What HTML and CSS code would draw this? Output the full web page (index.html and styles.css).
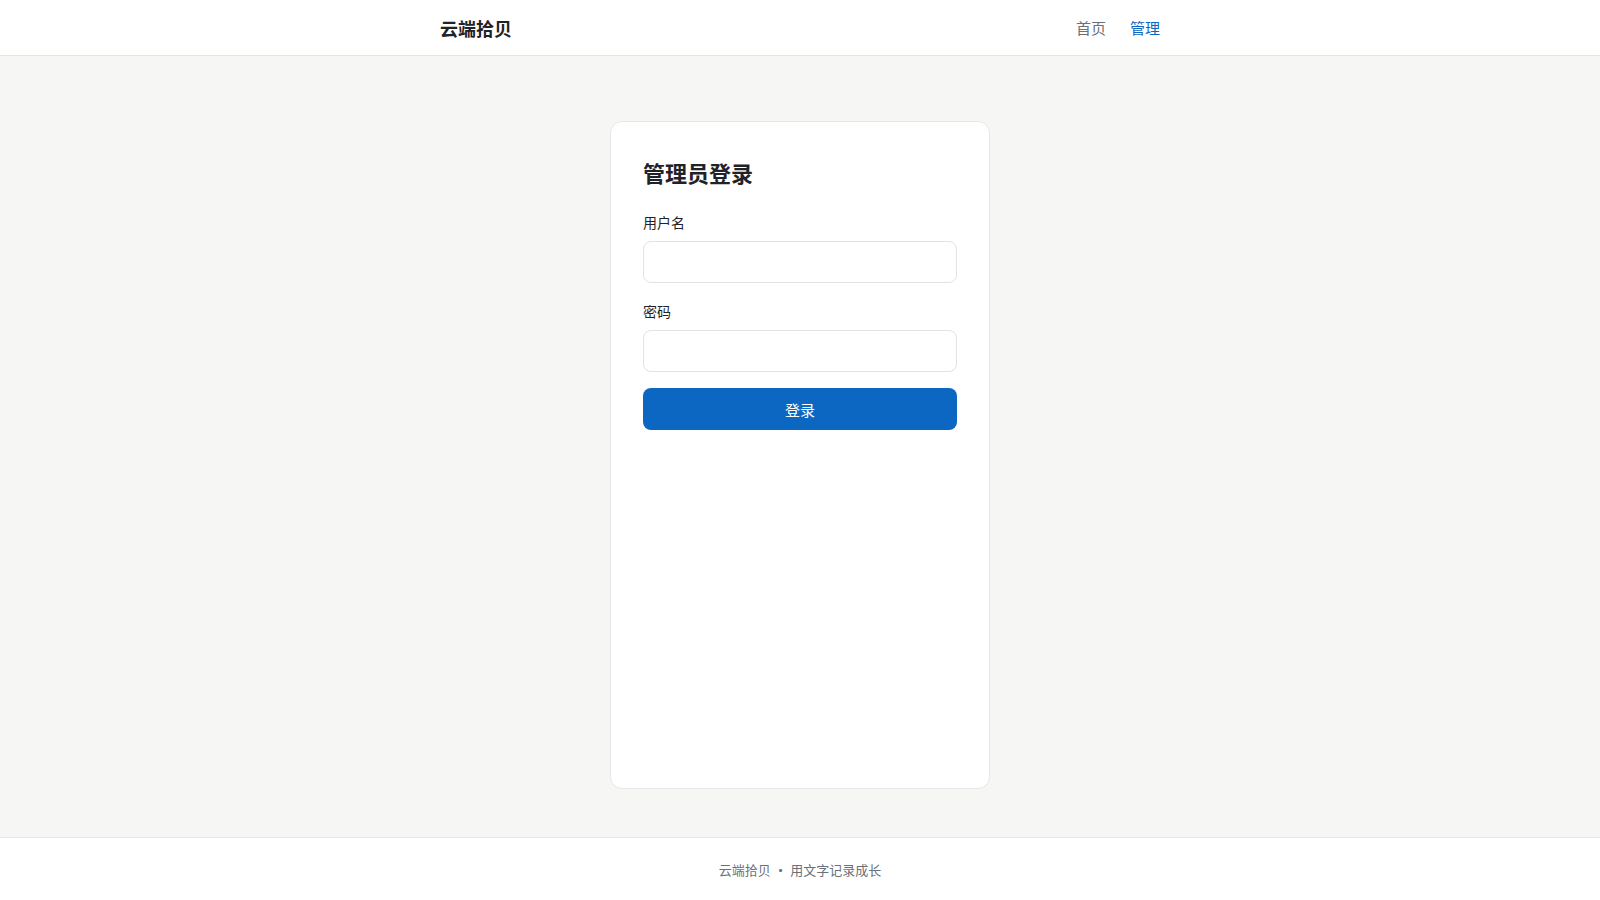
FILE: index.html
```html
<!DOCTYPE html>
<html lang="zh-CN">
<head>
<meta charset="utf-8">
<title>管理员登录 - 云端拾贝</title>
<link rel="stylesheet" href="styles.css">
</head>
<body>
<header class="site-header">
  <div class="container header-inner">
    <a class="brand" href="#">云端拾贝</a>
    <nav class="nav">
      <a class="nav-link" href="#">首页</a>
      <a class="nav-link active" href="#">管理</a>
    </nav>
  </div>
</header>
<main class="main">
  <section class="card">
    <h1 class="card-title">管理员登录</h1>
    <form class="form">
      <label class="field">
        <span class="field-label">用户名</span>
        <input class="input" type="text">
      </label>
      <label class="field">
        <span class="field-label">密码</span>
        <input class="input" type="password">
      </label>
      <button class="btn" type="button">登录</button>
    </form>
  </section>
</main>
<footer class="site-footer">
  <span>云端拾贝</span><span class="dot">•</span><span>用文字记录成长</span>
</footer>
</body>
</html>
```
FILE: styles.css
```css
* { box-sizing: border-box; }
html, body { margin: 0; padding: 0; }
body {
  font-family: Inter, "Noto Sans CJK SC", sans-serif;
  color: #1f2328;
  background: #f6f6f5;
  min-height: 100vh;
  display: flex;
  flex-direction: column;
}
a { text-decoration: none; }
.container { width: 720px; margin: 0 auto; }
.site-header {
  background: #fff;
  border-bottom: 1px solid #e5e5e5;
  height: 56px;
}
.header-inner {
  height: 55px;
  display: flex;
  align-items: center;
  justify-content: space-between;
}
.brand {
  font-size: 18px;
  font-weight: 700;
  color: #1f2328;
}
.nav { display: flex; gap: 24px; }
.nav-link { font-size: 15px; color: #6b7078; }
.nav-link.active { color: #0b67c2; }
.main {
  flex: 1;
  display: flex;
  justify-content: center;
  padding: 65px 16px 48px;
}
.card {
  width: 380px;
  background: #fff;
  border: 1px solid #e6e6e8;
  border-radius: 12px;
  padding: 32px;
}
.card-title {
  margin: 4px 0 22px;
  font-size: 22px;
  font-weight: 700;
  line-height: 32px;
  color: #1f2328;
}
.form { display: flex; flex-direction: column; }
.field { display: flex; flex-direction: column; margin-bottom: 18px; }
.field:last-of-type { margin-bottom: 16px; }
.field-label { font-size: 14px; line-height: 21px; margin-bottom: 8px; color: #1f2328; }
.input {
  height: 42px;
  border: 1px solid #e2e3e6;
  border-radius: 8px;
  background: #fff;
  font-size: 14px;
  padding: 0 12px;
  outline: none;
}
.btn {
  height: 42px;
  border: none;
  border-radius: 8px;
  background: #0b67c2;
  color: #fff;
  font-family: inherit;
  font-size: 15px;
  cursor: pointer;
}
.site-footer {
  background: #fff;
  border-top: 1px solid #e5e5e5;
  height: 63px;
  display: flex;
  align-items: center;
  justify-content: center;
  font-size: 13px;
  color: #6b7078;
}
.dot { margin: 0 7px; font-size: 10px; }
```
